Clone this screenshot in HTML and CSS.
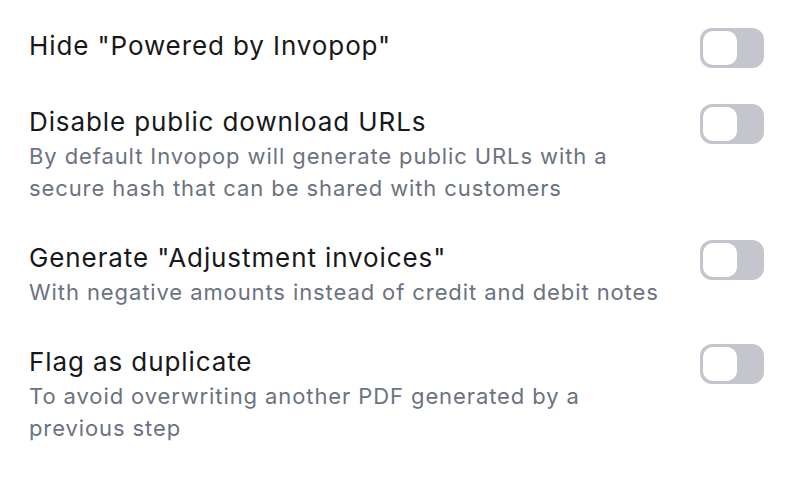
FILE: index.html
```html
<!DOCTYPE html>
<html lang="en">
<head>
    <meta charset="UTF-8">
    <meta name="viewport" content="width=device-width, initial-scale=1.0">
    <title>Settings</title>
    <link rel="stylesheet" href="styles.css">
</head>
<body>
    <div class="settings">
        <div class="setting">
            <div class="setting-text">
                <div class="setting-title">Hide "Powered by Invopop"</div>
            </div>
            <button class="toggle" aria-label="Hide Powered by Invopop"><span class="knob"></span></button>
        </div>
        <div class="setting">
            <div class="setting-text">
                <div class="setting-title">Disable public download URLs</div>
                <div class="setting-desc">By default Invopop will generate public URLs with a secure hash that can be shared with customers</div>
            </div>
            <button class="toggle" aria-label="Disable public download URLs"><span class="knob"></span></button>
        </div>
        <div class="setting">
            <div class="setting-text">
                <div class="setting-title">Generate "Adjustment invoices"</div>
                <div class="setting-desc">With negative amounts instead of credit and debit notes</div>
            </div>
            <button class="toggle" aria-label="Generate Adjustment invoices"><span class="knob"></span></button>
        </div>
        <div class="setting">
            <div class="setting-text">
                <div class="setting-title">Flag as duplicate</div>
                <div class="setting-desc">To avoid overwriting another PDF generated by a previous step</div>
            </div>
            <button class="toggle" aria-label="Flag as duplicate"><span class="knob"></span></button>
        </div>
    </div>
</body>
</html>
```

FILE: styles.css
```css
body {
    margin: 0;
    background-color: #ffffff;
    font-family: Inter, "Noto Sans", sans-serif;
}
.settings {
    display: flex;
    flex-direction: column;
    gap: 36px;
    padding: 28px 32px 0 29px;
}
.setting {
    display: flex;
    align-items: flex-start;
    gap: 32px;
}
.setting-text {
    flex: 1;
}
.setting-title {
    font-size: 26px;
    line-height: 36px;
    letter-spacing: 0.9px;
    color: #18181b;
}
.setting-desc {
    font-size: 22px;
    line-height: 32px;
    letter-spacing: 0.9px;
    color: #6b7280;
}
.toggle {
    display: flex;
    align-items: center;
    flex-shrink: 0;
    width: 64px;
    height: 40px;
    padding: 3px;
    border: none;
    border-radius: 12px;
    background-color: #c5c5cd;
    cursor: pointer;
}
.knob {
    display: block;
    width: 34px;
    height: 34px;
    border-radius: 10px;
    background-color: #ffffff;
}
```
